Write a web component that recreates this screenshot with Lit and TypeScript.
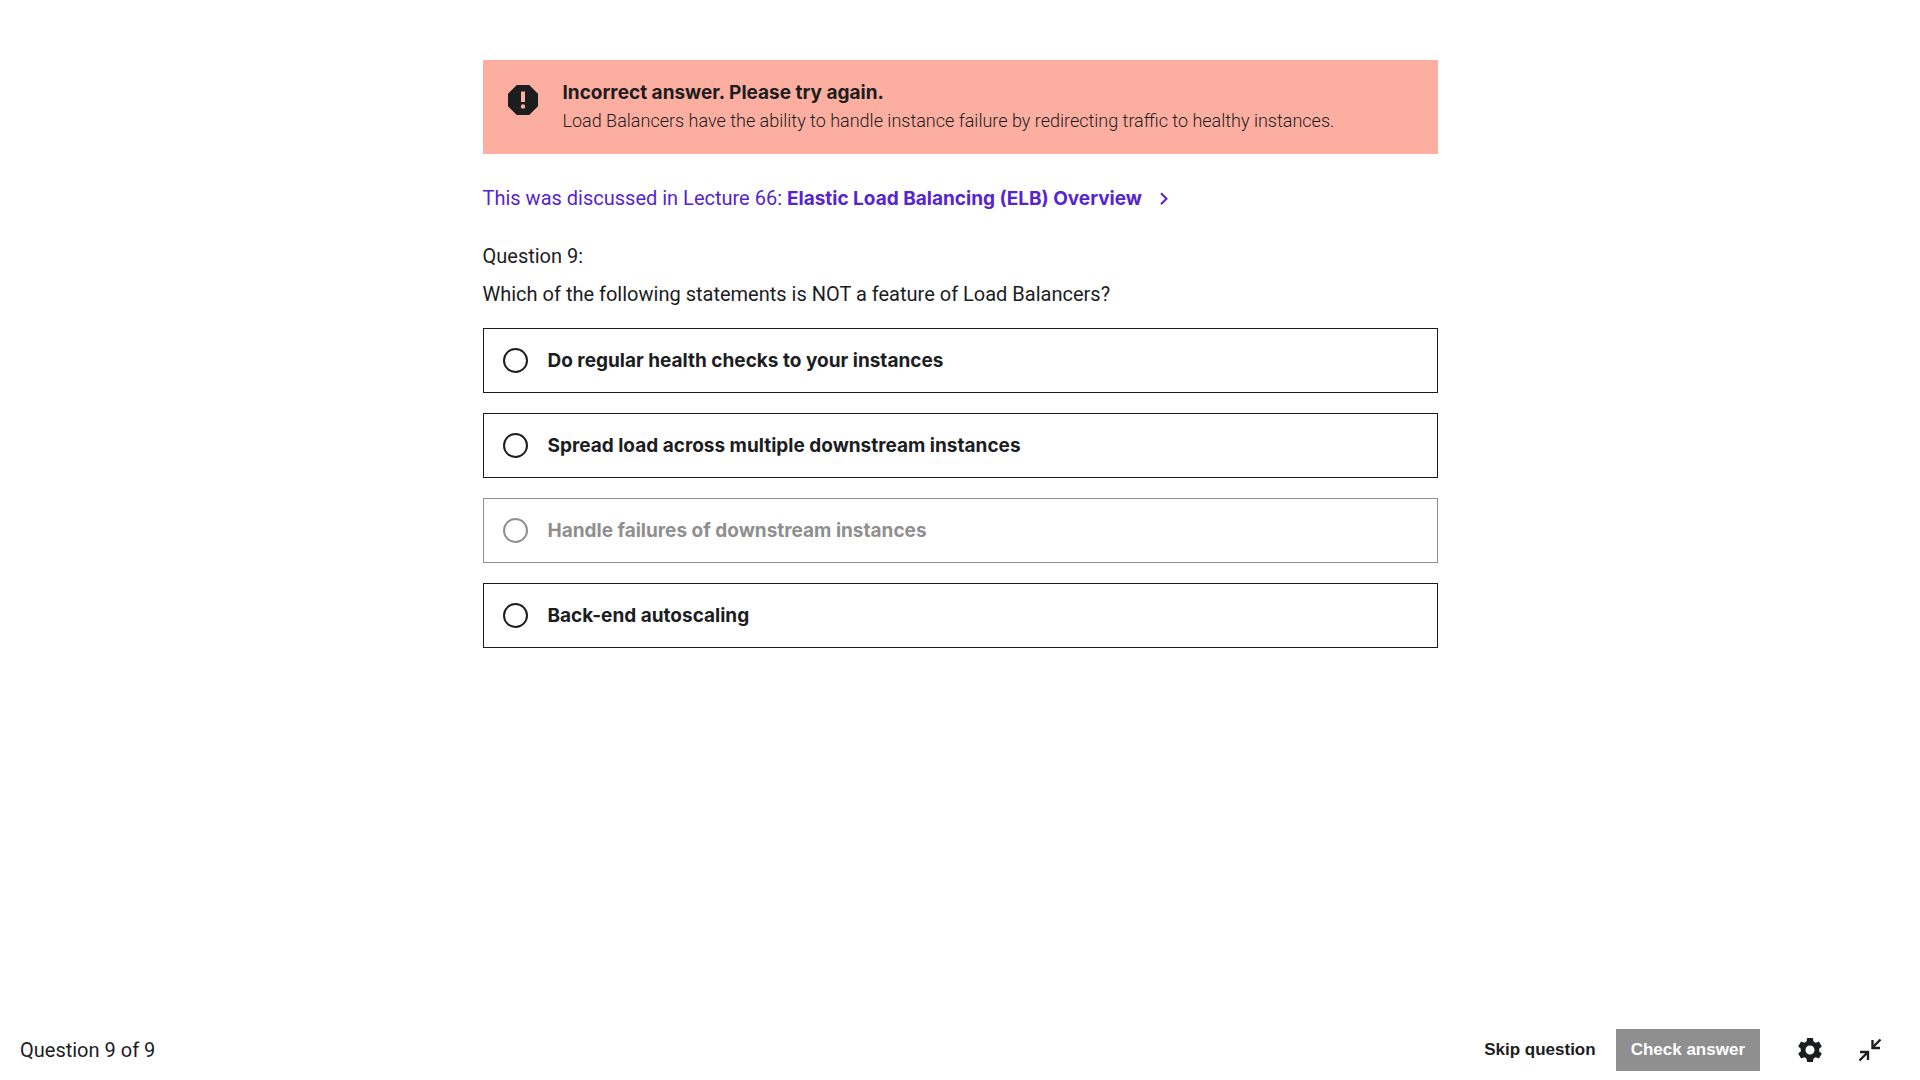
import { LitElement, html, svg, css } from "lit";
import { customElement, state } from "lit/decorators.js";

interface Answer {
  id: string;
  text: string;
  disabled: boolean;
}

const ANSWERS: Answer[] = [
  { id: "a1", text: "Do regular health checks to your instances", disabled: false },
  { id: "a2", text: "Spread load across multiple downstream instances", disabled: false },
  { id: "a3", text: "Handle failures of downstream instances", disabled: true },
  { id: "a4", text: "Back-end autoscaling", disabled: false },
];

const GEAR_TEETH = [0, 60, 120, 180, 240, 300];

@customElement("quiz-alert")
export class QuizAlert extends LitElement {
  static styles = css`
    :host {
      display: block;
    }
    .alert {
      display: flex;
      align-items: flex-start;
      gap: 20px;
      padding: 20px;
      background: #fcaea0;
      color: #1c1d1f;
    }
    .icon {
      flex: none;
      width: 40px;
      height: 40px;
    }
    .title {
      margin: 0;
      font: 700 19px/26px Inter, sans-serif;
    }
    .text {
      margin: 2px 0 0;
      font: 300 18px/26px Roboto, sans-serif;
    }
  `;

  render() {
    return html`
      <div class="alert" role="alert">
        <svg class="icon" viewBox="0 0 40 40" aria-hidden="true">
          <path
            fill="#1c1d1f"
            fill-rule="evenodd"
            d="M13.8 5h12.4L35 13.8v12.4L26.2 35H13.8L5 26.2V13.8zM18 11.500v10.500h4V11.500zM20 24.300a2.200 2.200 0 1 0 0 4.400 2.200 2.200 0 0 0 0-4.400z"
          />
        </svg>
        <div>
          <h2 class="title">Incorrect answer. Please try again.</h2>
          <p class="text">
            Load Balancers have the ability to handle instance failure by redirecting traffic to healthy instances.
          </p>
        </div>
      </div>
    `;
  }
}

@customElement("app-root")
export class AppRoot extends LitElement {
  static styles = css`
    :host {
      display: flex;
      flex-direction: column;
      min-height: 100vh;
      background: #fff;
      color: #1c1d1f;
      font: 400 20px/28px Roboto, sans-serif;
    }
    *,
    *::before {
      box-sizing: border-box;
    }
    main {
      flex: 1;
      width: 100%;
      max-width: 995px;
      margin: 0 auto;
      padding: 60px 20px;
    }
    .lecture {
      display: flex;
      align-items: center;
      gap: 12px;
      margin-top: 30px;
      color: #5624d0;
      text-decoration: none;
    }
    .lecture strong {
      font: 700 19px/28px Inter, sans-serif;
    }
    .lecture svg {
      width: 20px;
      height: 20px;
    }
    .number {
      margin: 29px 0 10px;
    }
    fieldset {
      margin: 0;
      padding: 0;
      border: 0;
      min-width: 0;
    }
    legend {
      padding: 0;
    }
    .answers {
      display: grid;
      gap: 20px;
      margin: 20px 0 0;
      padding: 0;
      list-style: none;
    }
    .answer {
      display: flex;
      align-items: center;
      gap: 20px;
      min-height: 65px;
      padding: 18px 19px;
      border: 1px solid #1c1d1f;
      font: 700 19px/27px Inter, sans-serif;
      cursor: pointer;
    }
    .answer.disabled {
      border-color: #8f8f8f;
      color: #8f8f8f;
      cursor: default;
    }
    .radio {
      flex: none;
      appearance: none;
      display: grid;
      place-items: center;
      width: 25px;
      height: 25px;
      margin: 0;
      border: 2px solid currentColor;
      border-radius: 50%;
      color: inherit;
    }
    .radio:checked::before {
      content: "";
      width: 13px;
      height: 13px;
      border-radius: 50%;
      background: currentColor;
    }
    footer {
      display: flex;
      align-items: center;
      justify-content: space-between;
      min-height: 60px;
      padding: 0 20px;
    }
    .actions {
      display: flex;
      align-items: center;
    }
    button {
      display: flex;
      align-items: center;
      justify-content: center;
      height: 42px;
      margin: 0;
      padding: 0;
      border: 0;
      background: none;
      color: inherit;
      font: 700 17px/24px "Liberation Sans", sans-serif;
      cursor: pointer;
    }
    .check {
      margin: 0 20px;
      padding: 0 15px;
      background: #8f8f8f;
      color: #fff;
    }
    .tool {
      width: 60px;
    }
    .tool svg {
      width: 30px;
      height: 30px;
    }
  `;

  @state() private selected = "";

  private renderAnswer(a: Answer) {
    return html`
      <li>
        <label class="answer ${a.disabled ? "disabled" : ""}" for=${a.id}>
          <input
            class="radio"
            type="radio"
            name="answer"
            id=${a.id}
            .checked=${this.selected === a.id}
            ?disabled=${a.disabled}
            @change=${() => (this.selected = a.id)}
          />
          <span>${a.text}</span>
        </label>
      </li>
    `;
  }

  render() {
    return html`
      <main>
        <quiz-alert></quiz-alert>
        <a class="lecture" href="#lecture-66">
          <span>This was discussed in Lecture 66: <strong>Elastic Load Balancing (ELB) Overview</strong></span>
          <svg viewBox="0 0 20 20" aria-hidden="true">
            <path d="M7 4.200 12.500 9.700 7 15.200" fill="none" stroke="currentColor" stroke-width="2" />
          </svg>
        </a>
        <p class="number">Question 9:</p>
        <fieldset>
          <legend>Which of the following statements is NOT a feature of Load Balancers?</legend>
          <ul class="answers">
            ${ANSWERS.map((a) => this.renderAnswer(a))}
          </ul>
        </fieldset>
      </main>
      <footer>
        <span>Question 9 of 9</span>
        <div class="actions">
          <button type="button">Skip question</button>
          <button type="button" class="check" ?disabled=${!this.selected}>Check answer</button>
          <button type="button" class="tool" aria-label="Settings">
            <svg viewBox="-15 -15 30 30" aria-hidden="true">
              <circle r="6.900" fill="none" stroke="currentColor" stroke-width="4.800" />
              ${GEAR_TEETH.map(
                (angle) => svg`<path
                  d="M-2.400-12h4.800q.5 0 .6.500l.7 4.500h-7.400l.7-4.500q.1-.5.6-.5z"
                  fill="currentColor"
                  transform="rotate(${angle})"
                />`,
              )}
            </svg>
          </button>
          <button type="button" class="tool" aria-label="Exit expanded view">
            <svg viewBox="0 0 30 30" aria-hidden="true">
              <path
                d="M25.500 4.500 18 12M17.500 5v8H25M4.500 25.500 12 18M13 25v-8H5"
                fill="none"
                stroke="currentColor"
                stroke-width="2.400"
              />
            </svg>
          </button>
        </div>
      </footer>
    `;
  }
}
